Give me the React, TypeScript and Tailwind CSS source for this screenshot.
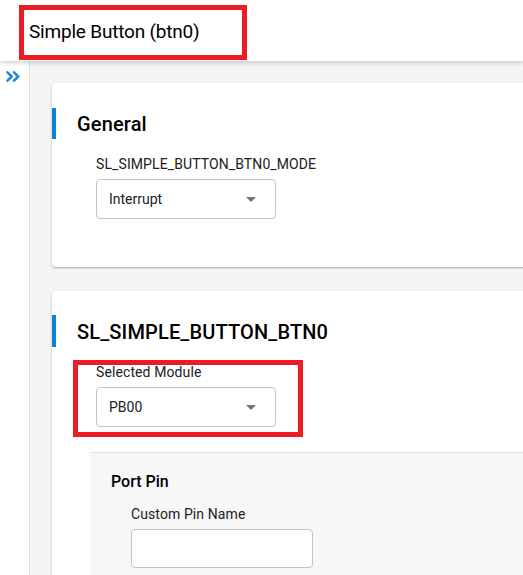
const font = { fontFamily: "Roboto, 'Liberation Sans', sans-serif" }

function Caret() {
  return (
    <svg width="10" height="5" viewBox="0 0 10 5" className="shrink-0">
      <path d="M0 0h10L5 5z" fill="#757575" />
    </svg>
  )
}

function Select({ value }: { value: string }) {
  return (
    <div className="w-[180px] h-[40px] flex items-center justify-between pl-[12px] pr-[19px] bg-white border border-[#c4c4c4] rounded-[4px]">
      <span className="text-[14px] text-[#212121]">{value}</span>
      <Caret />
    </div>
  )
}

function CardHeading({ title, barH }: { title: string; barH: string }) {
  return (
    <div className="flex items-center">
      <div className={`w-[4px] ${barH} bg-[#0a84d6]`} />
      <h2 className="pl-[21px] pt-[2px] text-[20px] font-medium tracking-[0.15px] text-black">{title}</h2>
    </div>
  )
}

export default function App() {
  return (
    <div style={font} className="w-[523px] h-[575px] overflow-hidden flex flex-col bg-white">
      <header className="h-[61px] shrink-0 bg-white relative z-10 shadow-[0_2px_4px_rgba(0,0,0,0.18)] pl-[19px] pt-[5px]">
        <div className="w-[228px] h-[55px] border-[5px] border-[#ed1c24] flex items-center pl-[5px]">
          <h1 className="text-[19px] tracking-[-0.2px] text-black">Simple Button (btn0)</h1>
        </div>
      </header>
      <div className="flex flex-1 min-h-0">
        <aside className="w-[30px] shrink-0 bg-white border-r border-[#dcdcdc] pt-[10px] pl-[6px]">
          <svg width="14" height="11" viewBox="0 0 14 11" fill="none" stroke="#1a88d8" strokeWidth="2.5" strokeLinecap="round" strokeLinejoin="round">
            <path d="M1.5 1.3l4.2 4.2-4.2 4.2" />
            <path d="M8 1.3l4.2 4.2-4.2 4.2" />
          </svg>
        </aside>
        <main className="flex-1 bg-[#f5f5f5] overflow-hidden pl-[22px] pt-[22px]">
          <section className="w-[600px] h-[184px] bg-white rounded-[4px] shadow-[0_1px_3px_rgba(0,0,0,0.2),0_1px_1px_rgba(0,0,0,0.12)] pt-[24px]">
            <CardHeading title="General" barH="h-[31px]" />
            <div className="pl-[44px] mt-[15px]">
              <div className="text-[14px] leading-[20px] tracking-[0.1px] text-[#212121]">SL_SIMPLE_BUTTON_BTN0_MODE</div>
              <div className="mt-[5px]">
                <Select value="Interrupt" />
              </div>
            </div>
          </section>
          <section className="w-[600px] h-[400px] mt-[24px] bg-white rounded-[4px] shadow-[0_1px_3px_rgba(0,0,0,0.2),0_1px_1px_rgba(0,0,0,0.12)] pt-[24px]">
            <CardHeading title="SL_SIMPLE_BUTTON_BTN0" barH="h-[32px]" />
            <div className="pl-[44px] mt-[15px]">
              <div className="relative w-[180px]">
                <div className="text-[14px] leading-[20px] tracking-[0.1px] text-[#212121]">Selected Module</div>
                <div className="mt-[5px]">
                  <Select value="PB00" />
                </div>
                <div className="absolute -left-[23px] -top-[2px] -right-[27px] -bottom-[10px] border-[5px] border-[#ed1c24]" />
              </div>
            </div>
            <div className="ml-[38px] mt-[25px] bg-[#f7f7f7] border-t border-[#e0e0e0] pt-[17px] pl-[21px] h-[200px]">
              <h3 className="text-[16px] leading-[24px] font-medium text-black">Port Pin</h3>
              <div className="pl-[20px] mt-[10px]">
                <div className="text-[14px] leading-[20px] tracking-[0.1px] text-[#212121]">Custom Pin Name</div>
                <div className="mt-[5px] w-[182px] h-[39px] bg-white border border-[#c4c4c4] rounded-[4px]" />
              </div>
            </div>
          </section>
        </main>
      </div>
    </div>
  )
}
